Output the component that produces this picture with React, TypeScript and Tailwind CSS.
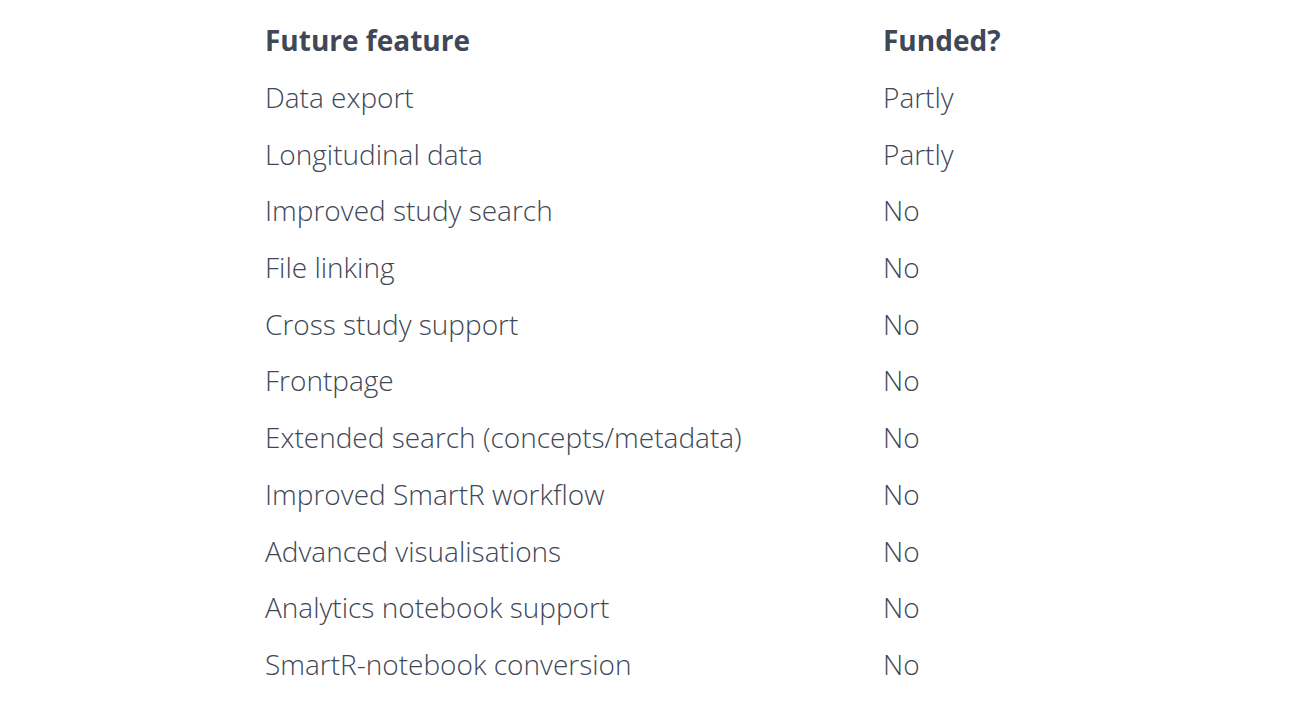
const rows: [string, string][] = [
  ["Data export", "Partly"],
  ["Longitudinal data", "Partly"],
  ["Improved study search", "No"],
  ["File linking", "No"],
  ["Cross study support", "No"],
  ["Frontpage", "No"],
  ["Extended search (concepts/metadata)", "No"],
  ["Improved SmartR workflow", "No"],
  ["Advanced visualisations", "No"],
  ["Analytics notebook support", "No"],
  ["SmartR-notebook conversion", "No"],
];

export default function App() {
  return (
    <div className="min-h-screen bg-white font-['Open_Sans',sans-serif] text-[#404756]">
      <div className="pl-[265px] pt-[12px]">
        <div className="grid grid-cols-[618px_1fr] text-[28px]">
          <div className="h-[56.7px] flex items-center font-bold">Future feature</div>
          <div className="h-[56.7px] flex items-center font-bold">Funded?</div>
          {rows.map(([f, v]) => (
            <div key={f} className="contents">
              <div className="h-[56.7px] flex items-center font-light">{f}</div>
              <div className="h-[56.7px] flex items-center font-light">{v}</div>
            </div>
          ))}
        </div>
      </div>
    </div>
  );
}
